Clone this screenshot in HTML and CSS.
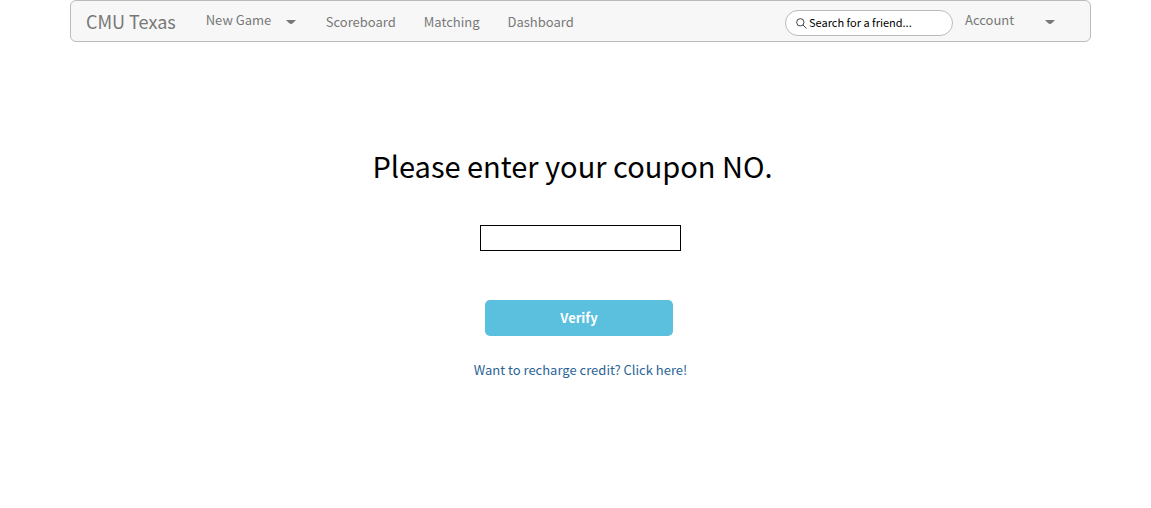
FILE: index.html
```html
<!DOCTYPE html>
<html lang="en">
<head>
<meta charset="utf-8">
<meta name="viewport" content="width=device-width, initial-scale=1">
<title>CMU Texas</title>
<link rel="stylesheet" href="styles.css">
</head>
<body>
<div class="page">
  <nav class="navbar">
    <a class="brand" href="#">CMU Texas</a>
    <button class="menu menu-game" type="button">New Game
      <svg class="caret" viewBox="0 0 10 5" aria-hidden="true"><path d="M0 0h10Q8.500 1.500 7 3 5 5 3 3 1.500 1.500 0 0z"/></svg>
    </button>
    <div class="links">
      <a href="#">Scoreboard</a>
      <a href="#">Matching</a>
      <a href="#">Dashboard</a>
    </div>
    <label class="search">
      <svg class="search-icon" viewBox="0 0 12 12" aria-hidden="true"><circle cx="4.700" cy="4.700" r="4"/><path d="M7.500 7.500 11.500 11.500"/></svg>
      <input type="search" placeholder="Search for a friend..." aria-label="Search for a friend">
    </label>
    <button class="menu menu-account" type="button">Account
      <svg class="caret" viewBox="0 0 10 5" aria-hidden="true"><path d="M0 0h10Q8.500 1.500 7 3 5 5 3 3 1.500 1.500 0 0z"/></svg>
    </button>
  </nav>
  <main>
    <form class="coupon">
      <h1><label for="coupon">Please enter your coupon NO.</label></h1>
      <input class="code" id="coupon" type="text">
      <button class="verify" type="button">Verify</button>
      <a class="recharge" href="#">Want to recharge credit? Click here!</a>
    </form>
  </main>
</div>
</body>
</html>
```
FILE: styles.css
```css
* {
  box-sizing: border-box;
}

body {
  margin: 0;
  background: #fff;
}

body,
button,
input {
  font-family: "Noto Sans CJK SC", "Open Sans", sans-serif;
  font-size: 13px;
  line-height: 20px;
}

a {
  text-decoration: none;
}

.page {
  margin: 0 60px 0 70px;
}

.navbar {
  display: flex;
  align-items: center;
  height: 42px;
  padding: 0 35px 0 15px;
  border: 1px solid #bbb;
  border-radius: 6px;
  background: #f7f7f7;
  color: #777;
  white-space: nowrap;
}

.brand {
  margin-right: 30px;
  color: #777;
  font-size: 18px;
}

.menu {
  display: flex;
  align-items: center;
  justify-content: space-between;
  padding: 0 0 2px;
  border: 0;
  background: none;
  color: #777;
}

.menu-game {
  width: 90px;
}

.menu-account {
  width: 90px;
  margin-left: 12px;
}

.caret {
  width: 10px;
  height: 5px;
  margin-top: 4px;
  fill: #777;
}

.links {
  display: flex;
  gap: 28px;
  margin-left: 30px;
  padding-top: 2px;
}

.links a {
  color: #777;
}

.search {
  display: flex;
  align-items: center;
  gap: 2px;
  width: 168px;
  height: 26px;
  margin: 4px 0 0 auto;
  padding: 0 10px;
  border: 1px solid #bbb;
  border-radius: 13px;
  background: #fff;
}

.search-icon {
  flex: none;
  width: 11px;
  height: 11px;
  fill: none;
  stroke: #333;
  stroke-width: 1;
}

.search input {
  flex: 1;
  min-width: 0;
  height: 20px;
  padding: 0 0 2px;
  border: 0;
  outline: 0;
  background: none;
  color: #000;
  font-size: 11px;
  appearance: none;
}

.search input::placeholder {
  color: #000;
  opacity: 1;
}

.coupon {
  display: flex;
  flex-direction: column;
  align-items: center;
  padding-top: 100px;
}

h1 {
  margin: 0;
  padding-right: 16px;
  color: #000;
  font-size: 29px;
  font-weight: 400;
  line-height: 46px;
}

.code {
  width: 201px;
  height: 26px;
  margin-top: 37px;
  padding: 0 4px;
  border: 1px solid #000;
  background: #fff;
}

.verify {
  width: 188px;
  height: 36px;
  margin: 49px 3px 0 0;
  border: 0;
  border-radius: 5px;
  background: #5bc0de;
  color: #fff;
  font-weight: 700;
}

.recharge {
  margin-top: 24px;
  color: #2a6496;
}
```
